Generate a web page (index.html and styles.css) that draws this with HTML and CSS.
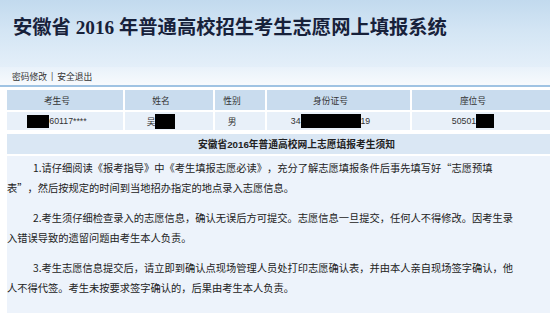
FILE: index.html
```html
<!DOCTYPE html>
<html lang="zh-CN">
<head>
<meta charset="utf-8">
<title>安徽省2016年普通高校招生考生志愿网上填报系统</title>
<link rel="stylesheet" href="styles.css">
</head>
<body>
<div class="page">
  <header class="banner">
    <h1 class="banner-title">安徽省 2016 年普通高校招生考生志愿网上填报系统</h1>
  </header>
  <nav class="toolbar">
    <a class="tool-link" href="#">密码修改</a>
    <span class="tool-sep">|</span>
    <a class="tool-link" href="#">安全退出</a>
  </nav>
  <main class="main">
    <div class="info-grid">
      <div class="cell head">考生号</div>
      <div class="cell head">姓名</div>
      <div class="cell head">性别</div>
      <div class="cell head">身份证号</div>
      <div class="cell head">座位号</div>
      <div class="cell data"><span class="mask mask-a"></span>60117****</div>
      <div class="cell data">吴<span class="mask mask-b"></span></div>
      <div class="cell data">男</div>
      <div class="cell data">34<span class="mask mask-c"></span>19</div>
      <div class="cell data">50501<span class="mask mask-d"></span></div>
    </div>
    <div class="notice-title">安徽省2016年普通高校网上志愿填报考生须知</div>
    <div class="notice-body">
      <p class="para">1.请仔细阅读《报考指导》中《考生填报志愿必读》，充分了解志愿填报条件后事先填写好<span class="fw">“</span>志愿预填表<span class="fw">”</span>，然后按规定的时间到当地招办指定的地点录入志愿信息。</p>
      <p class="para">2.考生须仔细检查录入的志愿信息，确认无误后方可提交。志愿信息一旦提交，任何人不得修改。因考生录入错误导致的遗留问题由考生本人负责。</p>
      <p class="para">3.考生志愿信息提交后，请立即到确认点现场管理人员处打印志愿确认表，并由本人亲自现场签字确认，他人不得代签。考生未按要求签字确认的，后果由考生本人负责。</p>
    </div>
  </main>
</div>
</body>
</html>
```

FILE: styles.css
```css
html, body {
  margin: 0;
  padding: 0;
  background: #ffffff;
}

.page {
  width: 550px;
  height: 313px;
  overflow: hidden;
  font-family: "Liberation Sans", "Noto Sans CJK SC", sans-serif;
  color: #222;
}

.banner {
  height: 67px;
  background: linear-gradient(180deg, #c2daee 0%, #d3e5f4 45%, #e4eff9 100%);
  padding-left: 13px;
  box-sizing: border-box;
  display: flex;
  align-items: flex-start;
}

.banner-title {
  margin: 15px 0 0 0;
  font-family: "Liberation Serif", "Noto Sans CJK SC", serif;
  font-size: 19.3px;
  line-height: 26px;
  font-weight: 600;
  color: #17213a;
}

.toolbar {
  height: 20px;
  box-sizing: border-box;
  background: linear-gradient(180deg, #e9f2fa 0%, #f7fafd 100%);
  border-bottom: 2px solid #9fc3e3;
  display: flex;
  align-items: center;
  gap: 4px;
  padding-left: 12px;
  font-size: 8.75px;
}

.tool-link {
  color: #333;
  text-decoration: none;
}

.tool-sep {
  color: #555;
}

.main {
  margin-left: 7px;
  padding-top: 3px;
}

.info-grid {
  display: grid;
  grid-template-columns: 116px 88px 50px 143px 1fr;
  grid-template-rows: 20px 18px;
  gap: 2px;
  font-size: 8.75px;
  color: #333;
}

.cell {
  display: flex;
  align-items: center;
  justify-content: center;
  padding-right: 16px;
  white-space: nowrap;
}

.head {
  background: #c9dcee;
}

.data {
  background: #e8f0f9;
}

.mask {
  display: inline-block;
  background: #000;
  height: 14px;
}

.mask-a {
  width: 22px;
  height: 13px;
}

.mask-b {
  width: 20px;
  height: 15px;
}

.mask-c {
  width: 60px;
}

.mask-d {
  width: 18px;
}

.notice-title {
  margin-top: 4px;
  height: 20px;
  background: #dae7f4;
  display: flex;
  align-items: center;
  justify-content: center;
  padding-left: 36px;
  font-size: 9.75px;
  font-weight: 700;
  color: #222;
}

.notice-body {
  margin-top: 2px;
  background: #edf3fb;
  padding-top: 2px;
  padding-right: 32px;
  min-height: 170px;
  font-family: "Noto Sans CJK SC", sans-serif;
  font-size: 10.25px;
  line-height: 20px;
  color: #222;
  text-spacing-trim: space-all;
}

.para {
  margin: 0 0 10px 0;
  text-indent: 26px;
}

.fw {
  font-feature-settings: "fwid" 1;
}
```
